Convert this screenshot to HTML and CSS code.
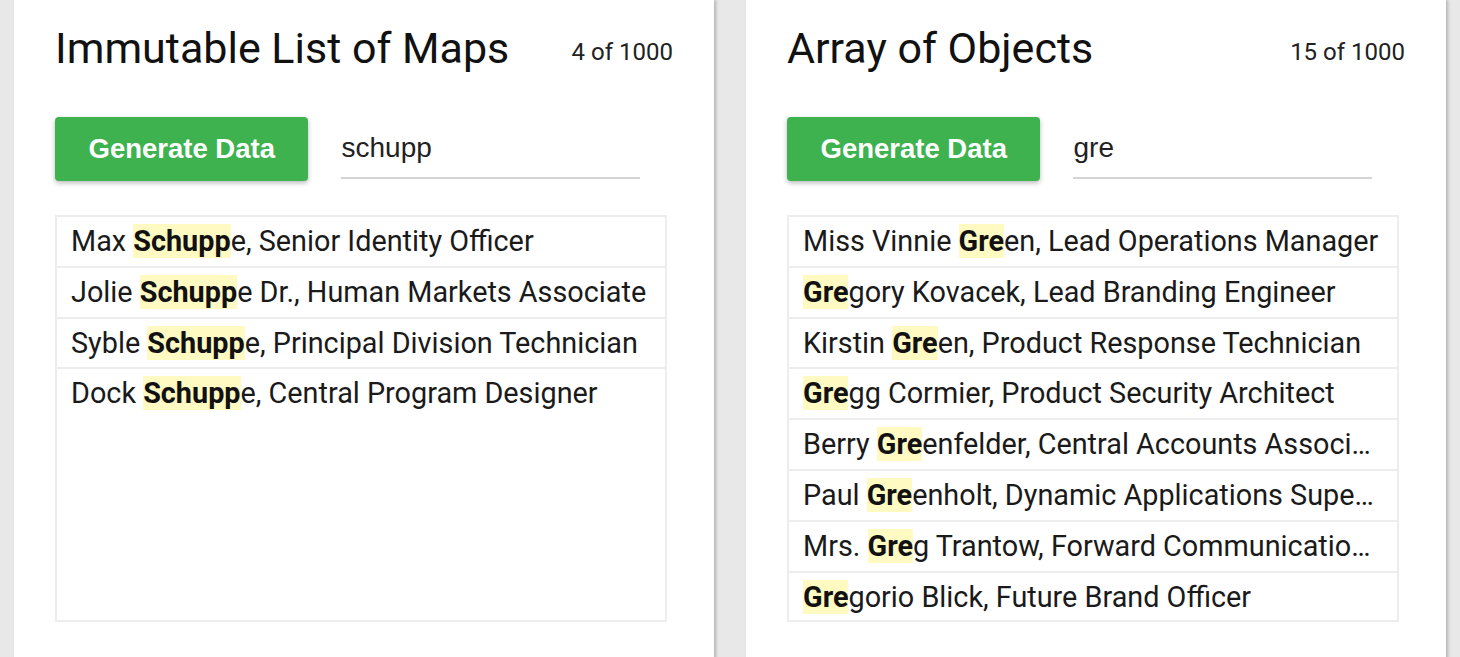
FILE: index.html
```html
<!DOCTYPE html>
<html lang="en">
<head>
    <meta charset="UTF-8">
    <meta name="viewport" content="width=device-width, initial-scale=1.0">
    <title>List Filter Benchmark</title>
    <link rel="stylesheet" href="styles.css">
</head>
<body>
    <div class="panels">
        <!-- Immutable version -->
        <div class="panel">
            <div class="panel-head">
                <h1>Immutable List of Maps</h1>
                <span class="count">4 of 1000</span>
            </div>
            <div class="controls">
                <button>Generate Data</button>
                <input type="text" value="schupp">
            </div>
            <ul class="results">
                <li>Max <mark>Schupp</mark>e, Senior Identity Officer</li>
                <li>Jolie <mark>Schupp</mark>e Dr., Human Markets Associate</li>
                <li>Syble <mark>Schupp</mark>e, Principal Division Technician</li>
                <li>Dock <mark>Schupp</mark>e, Central Program Designer</li>
            </ul>
        </div>

        <!-- Plain JS version -->
        <div class="panel">
            <div class="panel-head">
                <h1>Array of Objects</h1>
                <span class="count">15 of 1000</span>
            </div>
            <div class="controls">
                <button>Generate Data</button>
                <input type="text" value="gre">
            </div>
            <ul class="results">
                <li>Miss Vinnie <mark>Gre</mark>en, Lead Operations Manager</li>
                <li><mark>Gre</mark>gory Kovacek, Lead Branding Engineer</li>
                <li>Kirstin <mark>Gre</mark>en, Product Response Technician</li>
                <li><mark>Gre</mark>gg Cormier, Product Security Architect</li>
                <li>Berry <mark>Gre</mark>enfelder, Central Accounts Associate</li>
                <li>Paul <mark>Gre</mark>enholt, Dynamic Applications Supervisor</li>
                <li>Mrs. <mark>Gre</mark>g Trantow, Forward Communications Agent</li>
                <li><mark>Gre</mark>gorio Blick, Future Brand Officer</li>
            </ul>
        </div>
    </div>
</body>
</html>
```

FILE: styles.css
```css
* {
    box-sizing: border-box;
}

body {
    margin: 0;
    background-color: #e8e8e8;
    font-family: Roboto, 'Liberation Sans', sans-serif;
    color: #1a1a1a;
    height: 100vh;
    overflow: hidden; /* cards run past the bottom */
}

.panels {
    display: flex;
    gap: 32px;
    padding: 0 14px;
}

.panel {
    width: 700px;
    min-height: 720px;
    background-color: #fff;
    padding: 23px 41px 0;
    box-shadow: 2px 0 3px rgba(0, 0, 0, 0.22);
}

.panel-head {
    display: flex;
    justify-content: space-between;
    align-items: baseline;
}

.panel-head h1 {
    margin: 0;
    font-size: 43px;
    font-weight: 400;
    line-height: 50px;
    color: #111;
}

.count {
    font-size: 24px;
    color: #222;
    position: relative;
    top: -3px;
}

.controls {
    display: flex;
    align-items: center;
    gap: 33px;
    margin-top: 44px;
}

.controls button {
    height: 64px;
    padding: 0 33.5px;
    font-family: 'Liberation Sans', Arial, sans-serif;
    font-size: 27.5px;
    font-weight: 700;
    color: white;
    background-color: #3db24f;
    border: none;
    border-radius: 4px;
    box-shadow: 0 2px 5px rgba(0, 0, 0, 0.28);
    cursor: pointer;
}

.controls input {
    width: 299px;
    height: 60px;
    padding: 0;
    font-family: 'Liberation Sans', Arial, sans-serif;
    font-size: 28px;
    color: #222;
    border: none;
    border-bottom: 2px solid #d4d4d4;
    outline: none;
    background: transparent;
}

.results {
    list-style: none;
    margin: 34px 0 0;
    padding: 0;
    width: 612px;
    height: 407px;
    border: 2px solid #ededed;
    overflow: hidden;
}

.results li {
    height: 50.8px;
    padding: 0 16px 0 14px;
    border-bottom: 2px solid #ededed;
    font-size: 28.8px;
    line-height: 48px;
    white-space: nowrap;
    overflow: hidden;
    text-overflow: ellipsis;
}

.results li:last-child {
    border-bottom: none;
}

.results mark {
    background-color: #fff9c2;
    font-weight: 700;
    color: #111;
}
```
